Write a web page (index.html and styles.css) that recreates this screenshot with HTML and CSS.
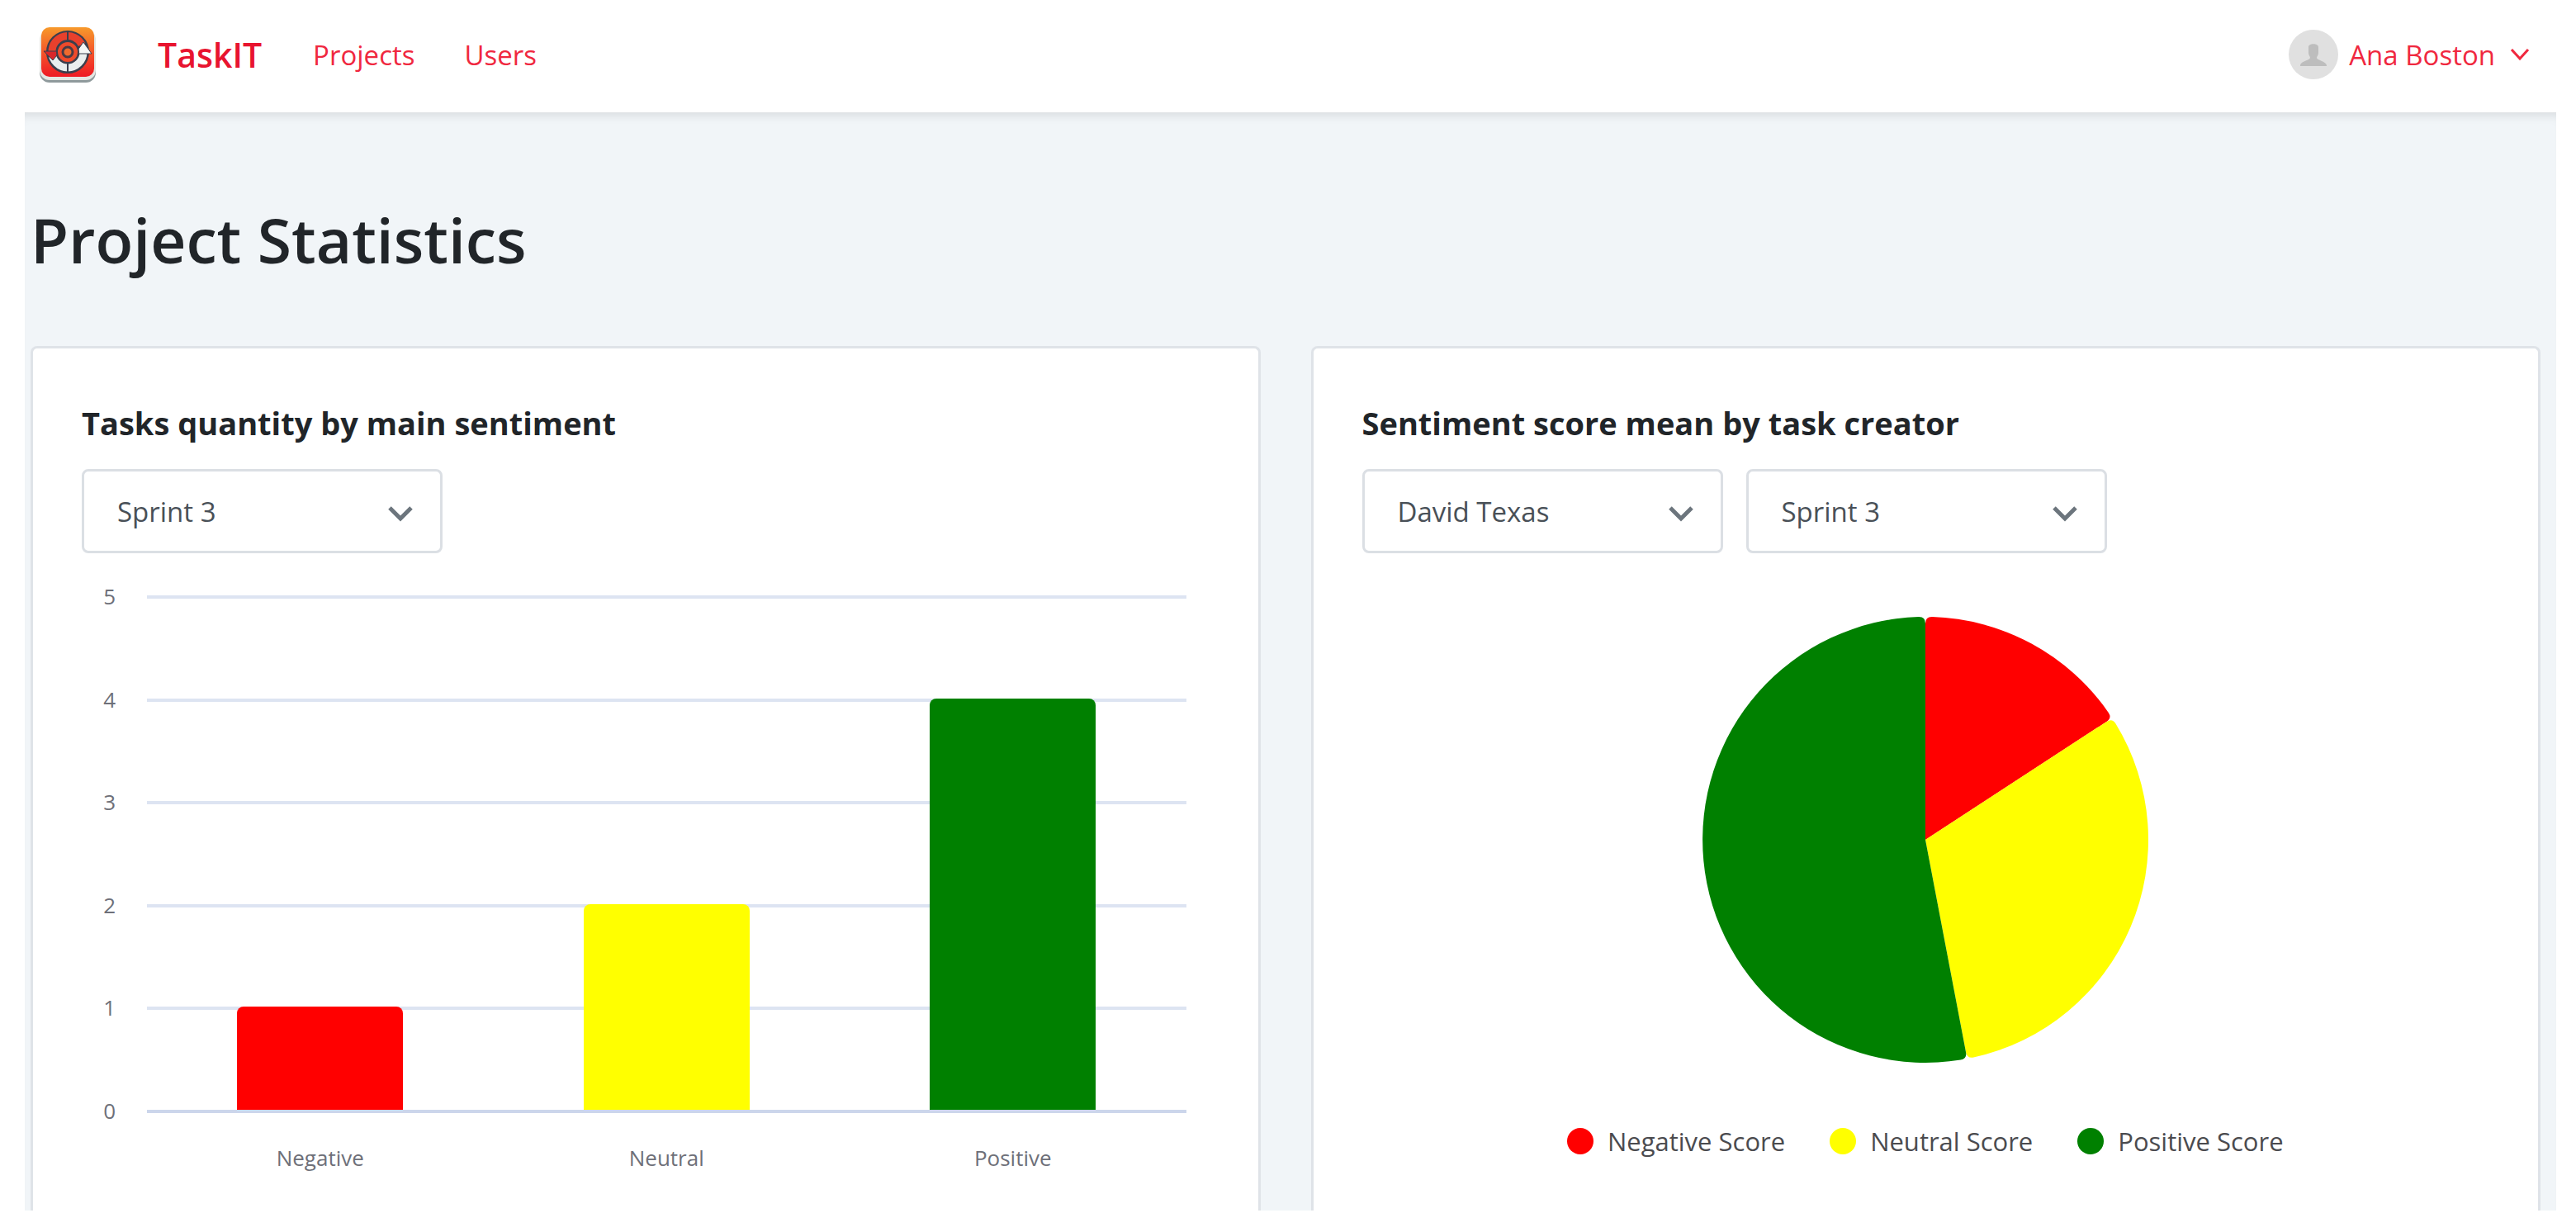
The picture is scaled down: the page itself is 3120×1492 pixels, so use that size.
FILE: index.html
```
<!DOCTYPE html>
<html lang="en">
<head>
    <meta charset="utf-8">
    <title>TaskIT - Project Statistics</title>
    <link rel="stylesheet" href="styles.css">
</head>
<body>
    <header class="navbar">
        <a href="#" class="logo" aria-label="TaskIT home">
            <svg viewBox="0 0 70 68" width="70" height="68">
                <defs>
                    <linearGradient id="logoBg" x1="0" y1="0" x2="0" y2="1">
                        <stop offset="0" stop-color="#f79a2b"/>
                        <stop offset="0.5" stop-color="#f4552a"/>
                        <stop offset="1" stop-color="#ee1a24"/>
                    </linearGradient>
                </defs>
                <rect x="1" y="8" width="68" height="60" rx="12" fill="#8f9a9c"/>
                <rect x="1" y="4" width="68" height="61" rx="12" fill="#e4e6e2"/>
                <rect x="3" y="1" width="64" height="60" rx="10" fill="url(#logoBg)"/>
                <circle cx="35" cy="31" r="19" fill="none" stroke="#3b3f4d" stroke-width="14"/>
                <path d="M16 31a19 19 0 0 1 36-9" fill="none" stroke="#e8402c" stroke-width="9"/>
                <path d="M54 31a19 19 0 0 1-38 0" fill="none" stroke="#e9eeee" stroke-width="9"/>
                <path d="M6 30h20l-9 11z" fill="#d8262a" stroke="#3b3f4d" stroke-width="1"/>
                <path d="M44 33h20L54 19z" fill="#f4f6f5" stroke="#3b3f4d" stroke-width="1"/>
                <circle cx="35" cy="31" r="13" fill="#ef4a2b" stroke="#3b3f4d" stroke-width="2"/>
                <circle cx="35" cy="31" r="6" fill="#ee6a2e" stroke="#4a3a44" stroke-width="3"/>
                <path d="M35 5v13M35 44v13" stroke="#3b3f4d" stroke-width="2"/>
            </svg>
        </a>
        <a href="#" class="brand">TaskIT</a>
        <nav class="nav-links">
            <a href="#">Projects</a>
            <a href="#">Users</a>
        </nav>
        <button type="button" class="user-menu">
            <svg class="avatar" viewBox="0 0 60 60" width="60" height="60">
                <circle cx="30" cy="30" r="30" fill="#e0e0e0"/>
                <path d="M24 21c0-5 12-5 12 0v7c0 3-2 4-2 6 0 3 11 4 12 9v1H14v-1c1-5 12-6 12-9 0-2-2-3-2-6z" fill="#bdbdbd"/>
            </svg>
            <span>Ana Boston</span>
            <svg class="chevron" viewBox="0 0 24 16" width="24" height="16">
                <path d="M2 2l10 11L22 2" fill="none" stroke="currentColor" stroke-width="3"/>
            </svg>
        </button>
    </header>

    <main class="page">
        <h1>Project Statistics</h1>

        <div class="cards">
            <section class="card">
                <h2>Tasks quantity by main sentiment</h2>
                <div class="filters">
                    <div class="select">
                        <select aria-label="Sprint">
                            <option>Sprint 3</option>
                        </select>
                        <svg viewBox="0 0 32 20" width="32" height="20">
                            <path d="M3 3l13 13L29 3" fill="none" stroke="#6c757d" stroke-width="5"/>
                        </svg>
                    </div>
                </div>

                <div class="bar-chart">
                    <div class="y-axis">
                        <span>5</span><span>4</span><span>3</span><span>2</span><span>1</span><span>0</span>
                    </div>
                    <div class="plot">
                        <div class="line"></div>
                        <div class="line"></div>
                        <div class="line"></div>
                        <div class="line"></div>
                        <div class="line"></div>
                        <div class="bars">
                            <div class="bar negative" style="height: 20%"></div>
                            <div class="bar neutral" style="height: 40%"></div>
                            <div class="bar positive" style="height: 80%"></div>
                        </div>
                    </div>
                    <div class="x-axis">
                        <span>Negative</span><span>Neutral</span><span>Positive</span>
                    </div>
                </div>
            </section>

            <section class="card">
                <h2>Sentiment score mean by task creator</h2>
                <div class="filters">
                    <div class="select">
                        <select aria-label="Task creator">
                            <option>David Texas</option>
                        </select>
                        <svg viewBox="0 0 32 20" width="32" height="20">
                            <path d="M3 3l13 13L29 3" fill="none" stroke="#6c757d" stroke-width="5"/>
                        </svg>
                    </div>
                    <div class="select">
                        <select aria-label="Sprint">
                            <option>Sprint 3</option>
                        </select>
                        <svg viewBox="0 0 32 20" width="32" height="20">
                            <path d="M3 3l13 13L29 3" fill="none" stroke="#6c757d" stroke-width="5"/>
                        </svg>
                    </div>
                </div>

                <div class="pie-chart">
                    <svg viewBox="-270 -270 540 540" width="540" height="540">
                        <path fill="red" d="M0 0V-262Q0 -270 8 -269.9A270 270 0 0 1 221.7 -154.1Q226.2 -147.5 219.5 -143.1Z"/>
                        <path fill="yellow" d="M0 0L219.5 -143.1Q226.2 -147.5 230.4 -140.8A270 270 0 0 1 58.4 263.6Q50.6 265.2 49.1 257.4Z"/>
                        <path fill="green" d="M0 0L49.1 257.4Q50.6 265.2 42.7 266.6A270 270 0 1 1 -8 -269.9Q0 -270 0 -262Z"/>
                    </svg>
                    <ul class="legend">
                        <li><i class="dot negative"></i>Negative Score</li>
                        <li><i class="dot neutral"></i>Neutral Score</li>
                        <li><i class="dot positive"></i>Positive Score</li>
                    </ul>
                </div>
            </section>
        </div>
    </main>
</body>
</html>
```

FILE: styles.css
```
* {
    box-sizing: border-box;
}
body {
    margin: 0;
    padding: 0 24px 26px 30px;
    background-color: #fff;
    color: #212529;
    font-family: "Open Sans", "Noto Sans", sans-serif;
    font-size: 33px;
}

/* Navbar */
.navbar {
    display: flex;
    align-items: center;
    height: 136px;
    padding: 0 32px 4px 17px;
}
.navbar a {
    color: #f0283f;
    text-decoration: none;
}
.logo {
    display: flex;
    margin-right: 74px;
}
.navbar .brand {
    color: #e8142f;
    font-size: 41px;
    font-weight: 600;
    margin-right: 62px;
}
.nav-links {
    display: flex;
    gap: 60px;
}
.user-menu {
    display: flex;
    align-items: center;
    margin-left: auto;
    padding: 0;
    border: none;
    background: none;
    color: #f0283f;
    font: inherit;
    cursor: pointer;
}
.avatar {
    margin-right: 13px;
}
.chevron {
    margin-left: 18px;
}

/* Page */
.page {
    padding: 102px 19px 0 7px;
    background-color: #f1f5f8;
    box-shadow: inset 0 12px 12px -8px rgba(0,0,0,0.1);
}
h1 {
    margin: 0;
    font-size: 75px;
    line-height: 104px;
    font-weight: 600;
}
.cards {
    display: grid;
    grid-template-columns: 1fr 1fr;
    gap: 61px;
    margin-top: 77px;
}
.card {
    min-height: 1047px;
    padding: 64px 60px 0 59px;
    background-color: #fff;
    border: 3px solid #dfe3e8;
    border-bottom: none;
    border-radius: 8px 8px 0 0;
}
h2 {
    margin: 0;
    font-size: 38px;
    line-height: 52px;
    font-weight: 700;
}
.filters {
    display: flex;
    gap: 28px;
    margin-top: 30px;
}
.select {
    position: relative;
}
.select select {
    appearance: none;
    width: 437px;
    height: 102px;
    padding: 0 80px 0 40px;
    border: 3px solid #dbdfe4;
    border-radius: 8px;
    background-color: #fff;
    color: #495057;
    font: inherit;
}
.select svg {
    position: absolute;
    right: 35px;
    top: 44px;
    pointer-events: none;
}

/* Bar chart */
.bar-chart {
    display: grid;
    grid-template-columns: 41px 1fr;
    column-gap: 38px;
    padding-right: 27px;
    margin-top: 51px;
    font-size: 26px;
    color: #6e7079;
}
.y-axis {
    display: flex;
    flex-direction: column;
    justify-content: space-between;
    margin: -17px 0 -15px;
    line-height: 36px;
    text-align: right;
}
.plot {
    position: relative;
    display: flex;
    flex-direction: column;
    height: 627px;
    border-bottom: 4px solid #ccd6eb;
}
.line {
    flex: 1;
    border-top: 4px solid #dde4f2;
}
.bars {
    position: absolute;
    inset: 0;
    display: flex;
    justify-content: space-around;
    align-items: flex-end;
}
.bar {
    width: 16%;
    border-radius: 8px 8px 0 0;
}
.negative {
    background-color: red;
}
.neutral {
    background-color: yellow;
}
.positive {
    background-color: green;
}
.x-axis {
    grid-column: 2;
    display: grid;
    grid-template-columns: repeat(3, 1fr);
    margin-top: 36px;
    line-height: 36px;
    text-align: center;
}

/* Pie chart */
.pie-chart {
    display: flex;
    flex-direction: column;
    align-items: center;
    margin-top: 77px;
}
.legend {
    display: flex;
    gap: 54px;
    margin: 74px 0 0;
    padding: 0;
    list-style: none;
    font-size: 31px;
    line-height: 42px;
    color: #4b4b4f;
}
.legend li {
    display: flex;
    align-items: center;
    gap: 17px;
}
.dot {
    width: 32px;
    height: 32px;
    border-radius: 50%;
}
```
